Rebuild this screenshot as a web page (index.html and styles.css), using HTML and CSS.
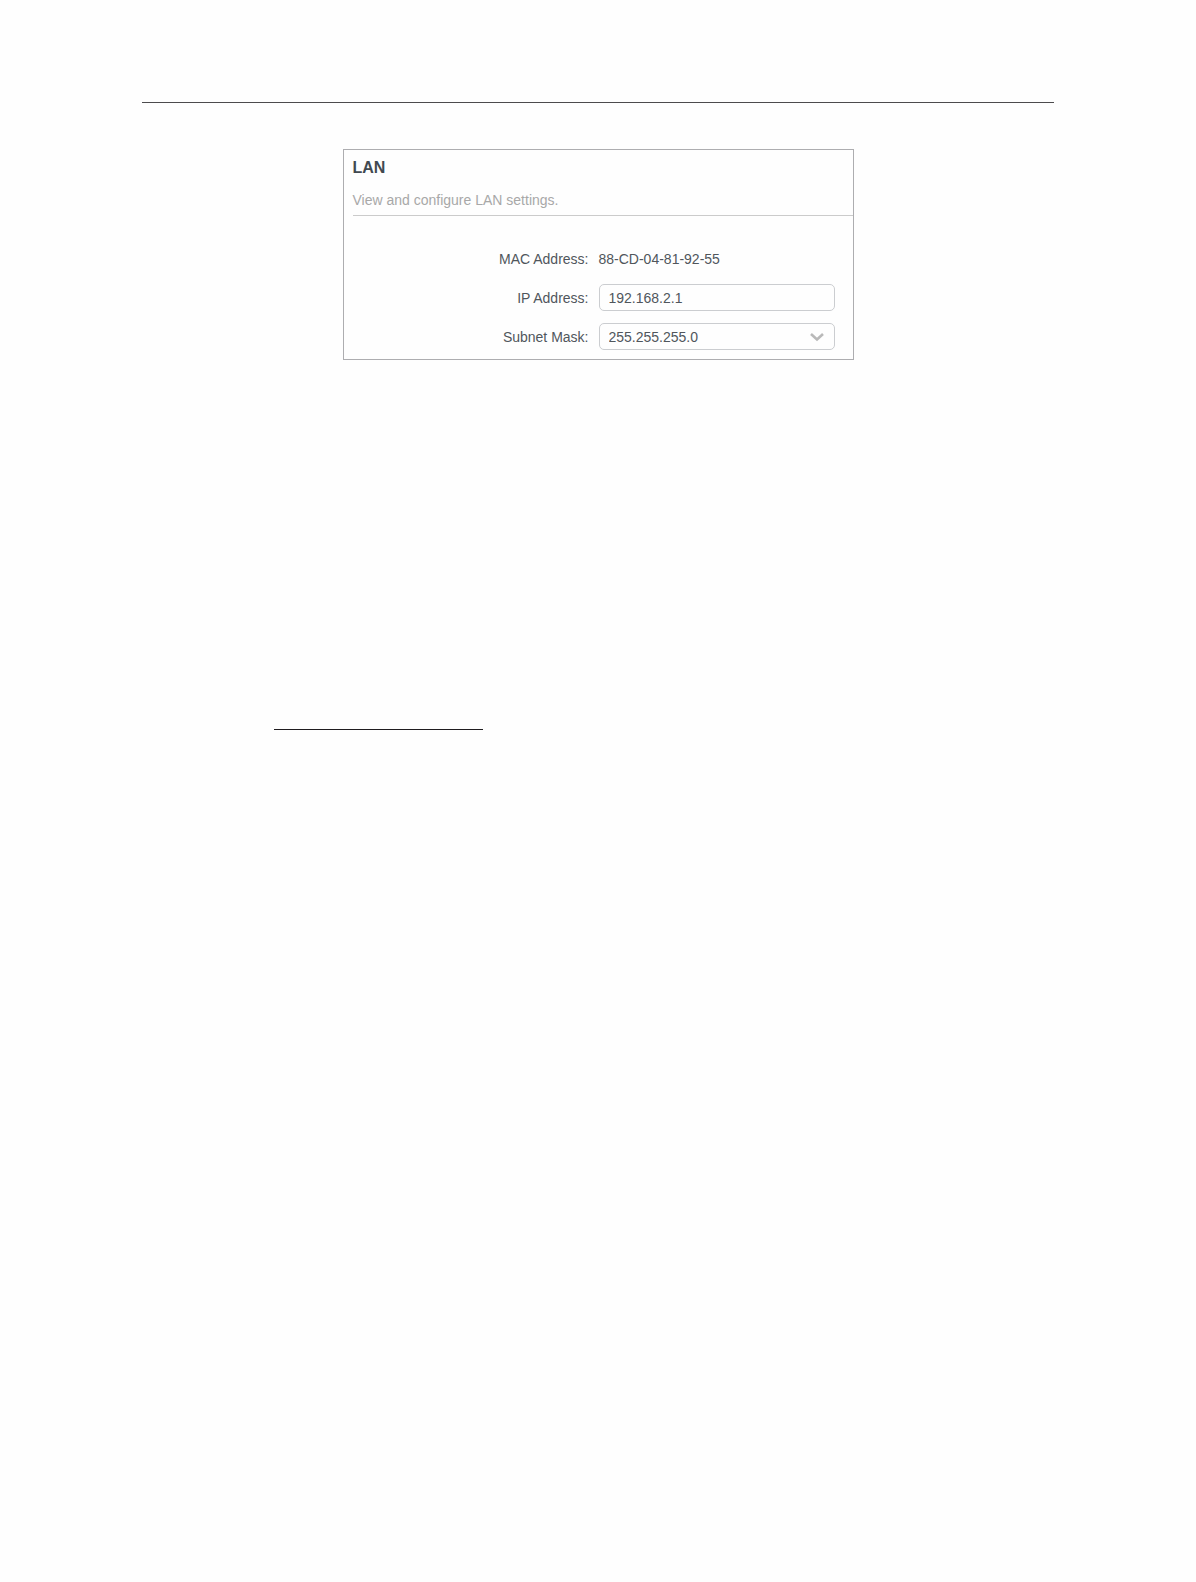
FILE: index.html
```html
<!DOCTYPE html>
<html lang="en">
<head>
<meta charset="utf-8">
<meta name="viewport" content="width=device-width, initial-scale=1">
<title>LAN</title>
<link rel="stylesheet" href="styles.css">
</head>
<body>
<main class="page">
  <hr class="page-rule">
  <section class="panel">
    <header class="panel-header">
      <h1 class="panel-title">LAN</h1>
      <p class="panel-note">View and configure LAN settings.</p>
    </header>
    <form class="settings">
      <span class="label">MAC Address:</span>
      <span class="value">88-CD-04-81-92-55</span>
      <label class="label" for="ip">IP Address:</label>
      <input class="field" id="ip" type="text" value="192.168.2.1">
      <label class="label" for="mask">Subnet Mask:</label>
      <div class="select">
        <select class="field" id="mask"><option>255.255.255.0</option></select>
        <svg class="chevron" width="14" height="9" viewBox="0 0 14 9" aria-hidden="true"><path d="M1 1l6 5.5L13 1" fill="none" stroke="#b9b9b9" stroke-width="2.6"/></svg>
      </div>
    </form>
  </section>
  <hr class="text-rule">
</main>
</body>
</html>
```
FILE: styles.css
```css
* {
  box-sizing: border-box;
}

body {
  margin: 0;
  background: #fefefe;
  color: #50565c;
  font: 14px/20px "Liberation Sans", Arial, sans-serif;
}

.page {
  max-width: 1196px;
  margin: 0 auto;
  padding: 102px 142px;
}

.page-rule,
.text-rule {
  height: 1px;
  margin: 0;
  border: 0;
  background: #4c4b4d;
}

.panel {
  max-width: 511px;
  margin: 46px auto 0;
  padding: 0 0 9px 9px;
  border: 1px solid #adadb0;
}

.panel-header {
  padding: 8px 0 5px;
  border-bottom: 1px solid #cbcbcb;
}

.panel-title {
  margin: 0 0 12px;
  color: #414950;
  font-size: 16px;
  line-height: 20px;
}

.panel-note {
  margin: 0;
  color: #a8a8a8;
}

.settings {
  display: grid;
  grid-template-columns: 1fr 1fr;
  grid-auto-rows: 27px;
  align-items: center;
  gap: 12px 10px;
  padding: 29px 18px 0 0;
}

.label {
  justify-self: end;
}

.field {
  width: 100%;
  height: 27px;
  padding: 0 9px;
  border: 1px solid #cbcdd0;
  border-radius: 5px;
  background: #fefefe;
  color: inherit;
  font: inherit;
  appearance: none;
}

.select {
  position: relative;
  height: 27px;
}

.chevron {
  position: absolute;
  top: 10px;
  right: 11px;
  pointer-events: none;
}

.text-rule {
  width: 209px;
  margin: 369px 0 0 132px;
  background: #1f1c1f;
}
```
